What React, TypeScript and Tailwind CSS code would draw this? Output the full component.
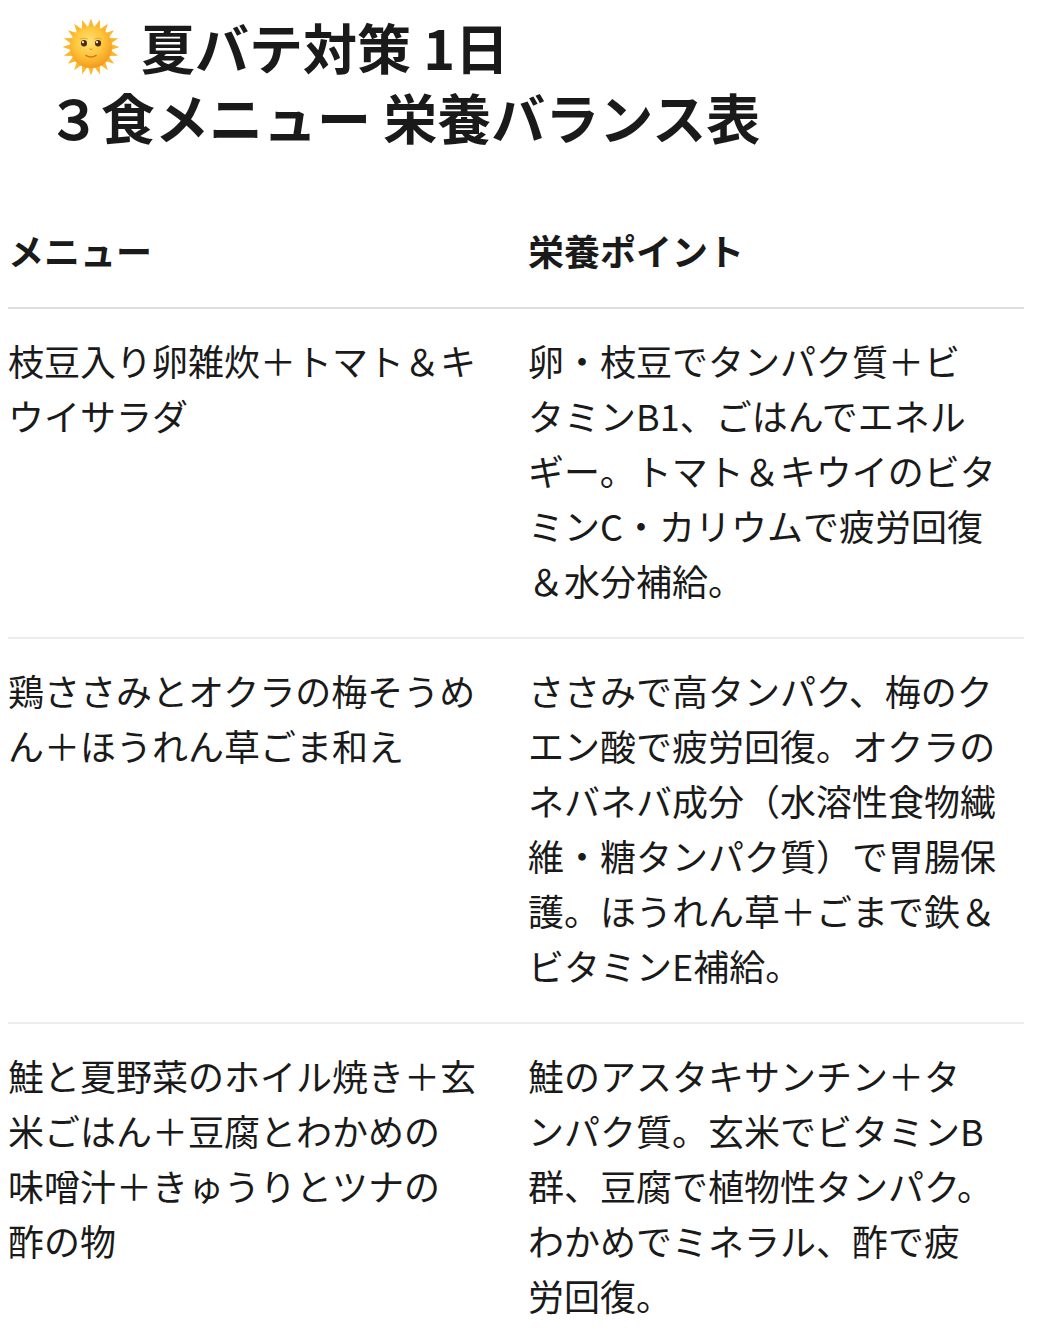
import { Fragment } from 'react'

type Row = {
  menu: string[]
  point: string[]
}

const rows: Row[] = [
  {
    menu: ['枝豆入り卵雑炊＋トマト＆キ', 'ウイサラダ'],
    point: [
      '卵・枝豆でタンパク質＋ビ',
      'タミンB1、ごはんでエネル',
      'ギー。トマト＆キウイのビタ',
      'ミンC・カリウムで疲労回復',
      '＆水分補給。'
    ]
  },
  {
    menu: ['鶏ささみとオクラの梅そうめ', 'ん＋ほうれん草ごま和え'],
    point: [
      'ささみで高タンパク、梅のク',
      'エン酸で疲労回復。オクラの',
      'ネバネバ成分（水溶性食物繊',
      '維・糖タンパク質）で胃腸保',
      '護。ほうれん草＋ごまで鉄＆',
      'ビタミンE補給。'
    ]
  },
  {
    menu: ['鮭と夏野菜のホイル焼き＋玄', '米ごはん＋豆腐とわかめの', '味噌汁＋きゅうりとツナの', '酢の物'],
    point: [
      '鮭のアスタキサンチン＋タ',
      'ンパク質。玄米でビタミンB',
      '群、豆腐で植物性タンパク。',
      'わかめでミネラル、酢で疲',
      '労回復。'
    ]
  }
]

function SunFace() {
  const rays = Array.from({ length: 20 }, (_, i) => i * 18)

  return (
    <svg width="60" height="60" viewBox="0 0 64 64" className="ml-[14px] inline-block shrink-0">
      <defs>
        <radialGradient id="sunBody" cx="45%" cy="38%" r="62%">
          <stop offset="0%" stopColor="#FFE27A" />
          <stop offset="55%" stopColor="#FFC53A" />
          <stop offset="100%" stopColor="#F39A1F" />
        </radialGradient>
      </defs>

      {rays.map(deg => (
        <polygon
          key={deg}
          points="32,1.5 35.2,11 28.8,11"
          fill="#FBB829"
          transform={`rotate(${deg} 32 32)`}
        />
      ))}

      <circle cx="32" cy="32" r="22.5" fill="url(#sunBody)" />

      {/* eyes */}
      <ellipse cx="24.5" cy="28" rx="3.2" ry="3.4" fill="#4A2E14" />
      <ellipse cx="39.5" cy="28" rx="3.2" ry="3.4" fill="#4A2E14" />
      <circle cx="23.4" cy="26.8" r="1.1" fill="#fff" />
      <circle cx="38.4" cy="26.8" r="1.1" fill="#fff" />
      <path d="M20.5 23.5 Q24.5 21.5 28.5 23.5" stroke="#E39A2A" strokeWidth="0.9" fill="none" />
      <path d="M35.5 23.5 Q39.5 21.5 43.5 23.5" stroke="#E39A2A" strokeWidth="0.9" fill="none" />

      {/* nose + smile */}
      <path d="M30.5 34 Q32 36.5 33.5 34" stroke="#E0861C" strokeWidth="1" fill="none" strokeLinecap="round" />
      <path d="M26.5 41 Q32 44.5 37.5 41" stroke="#D57519" strokeWidth="1.5" fill="none" strokeLinecap="round" />
    </svg>
  )
}

export default function App() {
  return (
    <div
      className="min-h-[1332px] w-[1040px] bg-white px-2 text-[#1a1a1a]"
      style={{ fontFamily: '"Noto Sans CJK JP", "Noto Sans", sans-serif' }}
    >
      {/* Title */}

      <h1 className="mb-[43px] ml-[39px] pt-3 text-[54px] font-bold leading-[70px]">
        <span className="flex h-[70px] items-center gap-[20px]">
          <SunFace />
          <span>夏バテ対策 1日</span>
        </span>
        <span className="block">３食メニュー 栄養バランス表</span>
      </h1>

      {/* Table */}

      <div className="grid w-[1016px] grid-cols-[520px_496px]">

        <div className="border-b-2 border-[#dedede] pb-[29px] pt-7 text-[36px] font-bold leading-[55px]">
          メニュー
        </div>
        <div className="border-b-2 border-[#dedede] pb-[29px] pt-7 text-[36px] font-bold leading-[55px]">
          栄養ポイント
        </div>

        {rows.map((row, i) => (
          <Fragment key={i}>
            <div
              className={`whitespace-nowrap pb-[29px] pt-6 text-[36px] leading-[55px] ${
                i < rows.length - 1 ? 'border-b-2 border-[#ececec]' : ''
              }`}
            >
              {row.menu.map(line => (
                <div key={line}>{line}</div>
              ))}
            </div>
            <div
              className={`whitespace-nowrap pb-[29px] pt-6 text-[36px] leading-[55px] ${
                i < rows.length - 1 ? 'border-b-2 border-[#ececec]' : ''
              }`}
            >
              {row.point.map(line => (
                <div key={line}>{line}</div>
              ))}
            </div>
          </Fragment>
        ))}

      </div>
    </div>
  )
}
